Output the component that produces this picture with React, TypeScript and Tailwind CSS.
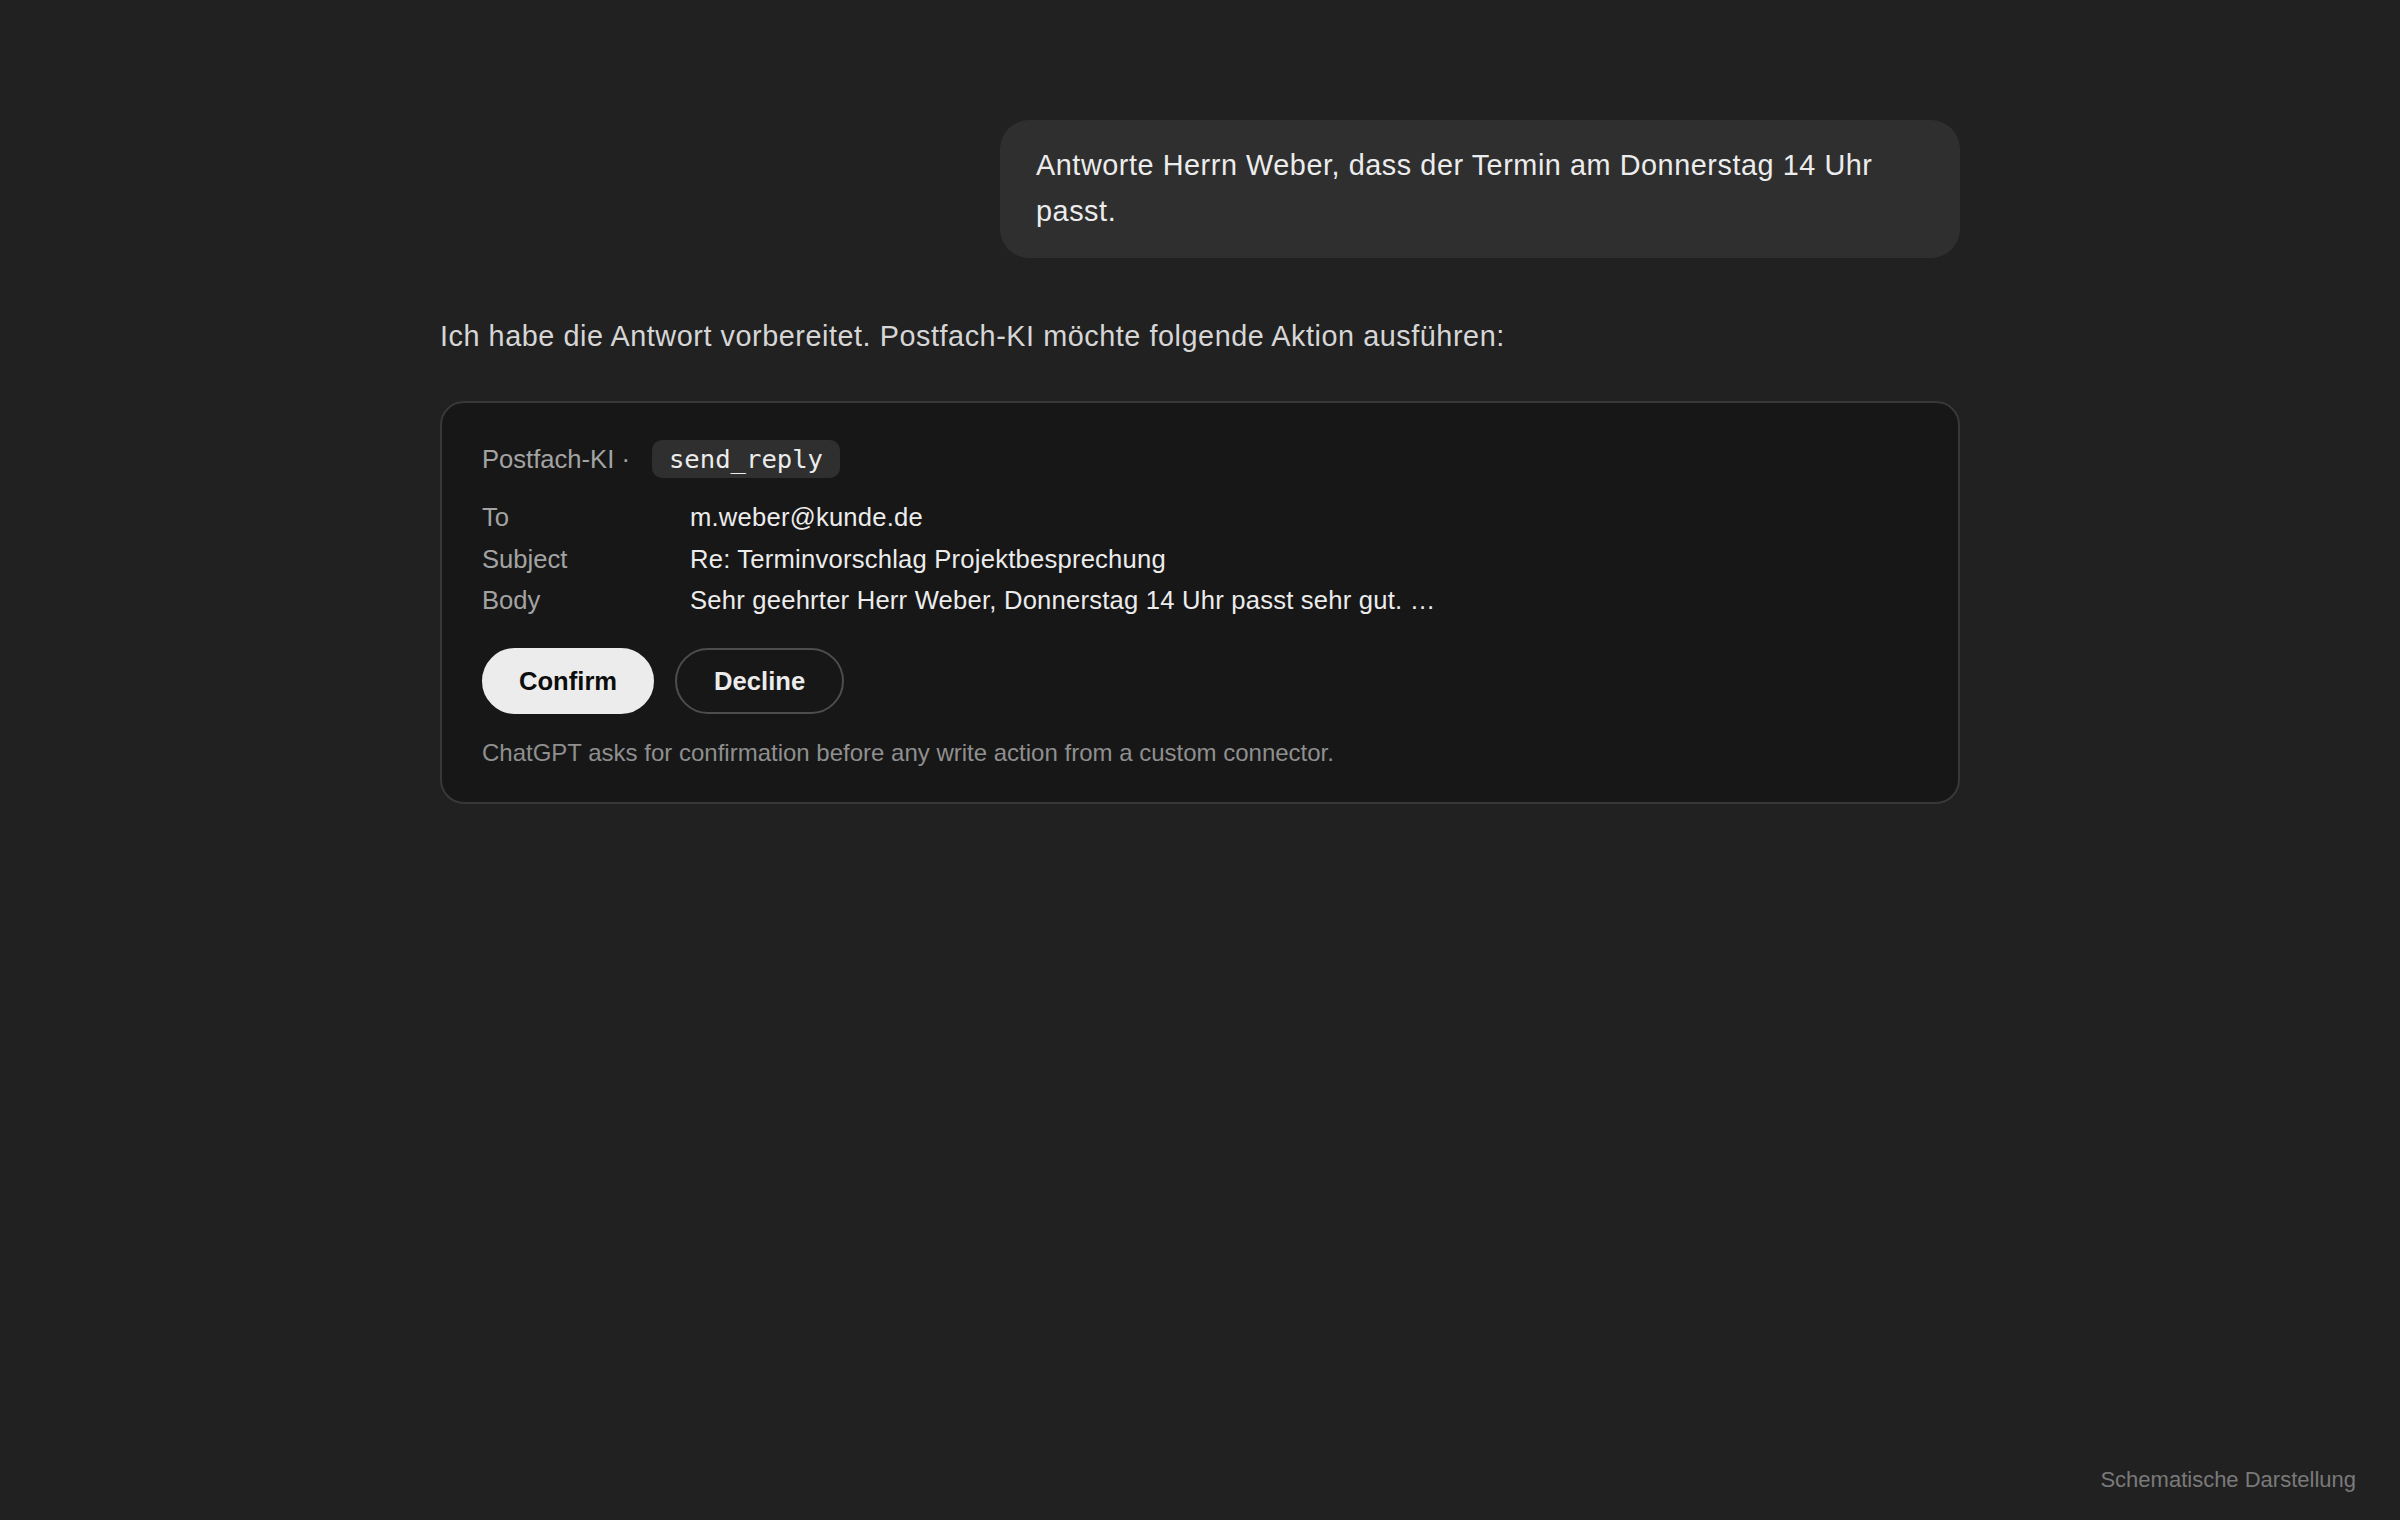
import React from "react";

const sans = "font-['Liberation_Sans',Arial,sans-serif]";

const fields: [string, string][] = [
  ["To", "m.weber@kunde.de"],
  ["Subject", "Re: Terminvorschlag Projektbesprechung"],
  ["Body", "Sehr geehrter Herr Weber, Donnerstag 14 Uhr passt sehr gut. …"],
];

/** Tool-call confirmation card shown under the assistant message. */
function ActionCard() {
  return (
    <div className="rounded-[24px] border-2 border-[#383838] bg-[#171717] pl-[40px] pr-[39px] pt-[37px] pb-[31px]">
      <div className="flex h-[38px] items-center text-[25.6px] text-[#a3a3a3]">
        <span>Postfach-KI ·</span>
        <code className="ml-[22px] flex h-[38px] items-center rounded-[10px] bg-[#2f2f2f] px-[17px] font-['DejaVu_Sans_Mono',monospace] text-[25.6px] text-[#ececec]">
          send_reply
        </code>
      </div>

      <div className="mt-[19px] grid grid-cols-[208px_1fr] text-[25.6px] leading-[41.6px]">
        {fields.map(([label, value]) => (
          <React.Fragment key={label}>
            <span className="text-[#a3a3a3]">{label}</span>
            <span className="tracking-[0.22px] text-[#ececec]">{value}</span>
          </React.Fragment>
        ))}
      </div>

      <div className="mt-[26px] flex gap-[21px]">
        <button className="h-[66px] rounded-full border-2 border-[#ececec] bg-[#ececec] px-[35px] text-[25.6px] font-bold text-[#0d0d0d]">
          Confirm
        </button>
        <button className="h-[66px] rounded-full border-2 border-[#4d4d4d] px-[37px] text-[25.6px] font-bold text-[#ececec]">
          Decline
        </button>
      </div>

      <p className="mt-[21px] text-[24px] leading-[36px] text-[#8f8f8f]">
        ChatGPT asks for confirmation before any write action from a custom connector.
      </p>
    </div>
  );
}

export default function App() {
  return (
    <div className={`flex h-[1520px] w-full flex-col bg-[#212121] ${sans}`}>
      <main className="mx-auto w-[1520px] pt-[120px]">
        <div className="flex justify-end">
          <div className="max-w-[960px] rounded-[29px] bg-[#2f2f2f] px-[36px] pt-[22px] pb-[24px] text-[28.8px] leading-[46px] tracking-[0.56px] text-[#ececec]">
            Antworte Herrn Weber, dass der Termin am Donnerstag 14 Uhr passt.
          </div>
        </div>

        <p className="mt-[55px] text-[28.8px] leading-[46px] tracking-[0.55px] text-[#d6d6d6]">
          Ich habe die Antwort vorbereitet. Postfach-KI möchte folgende Aktion ausführen:
        </p>

        <div className="mt-[42px]">
          <ActionCard />
        </div>
      </main>

      <footer className="mt-auto self-end pr-[44px] pb-[23px] text-[22px] leading-[34px] text-[#7a7a7a]">
        Schematische Darstellung
      </footer>
    </div>
  );
}
